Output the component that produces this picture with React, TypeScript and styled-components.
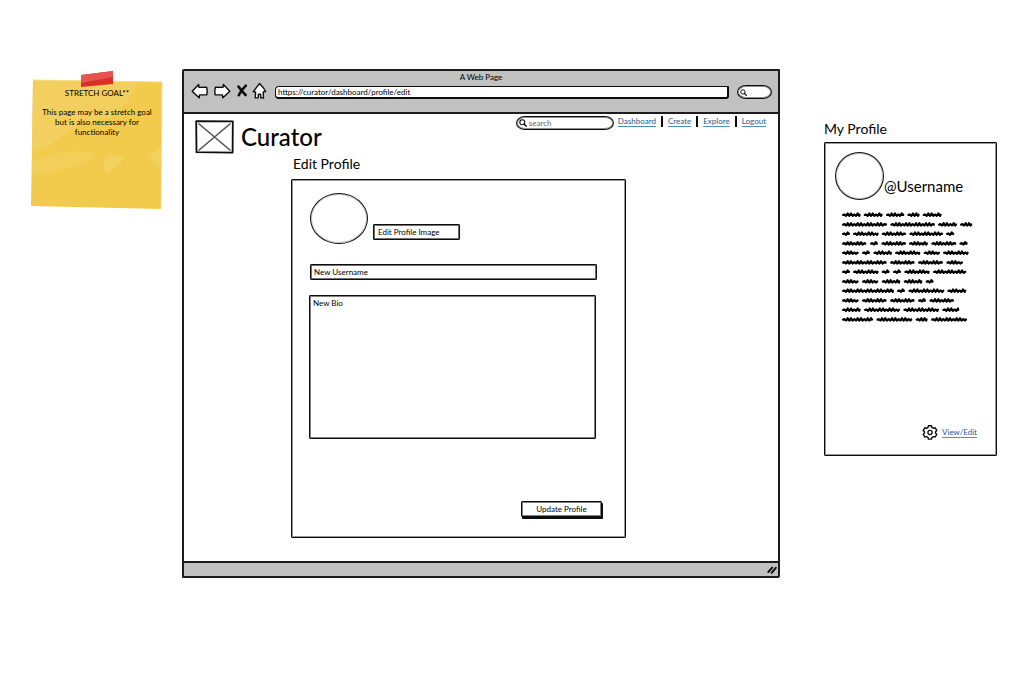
import React from "react";
import styled, { createGlobalStyle } from "styled-components";

const INK = "#0c0c0c";
const CHROME = "#c1c1c1";

const GlobalStyle = createGlobalStyle`
  *, *::before, *::after { box-sizing: border-box; }
  body {
    margin: 0;
    background: #fff;
    color: #000;
    font-family: Lato, "Open Sans", sans-serif;
    font-size: 8px;
    line-height: 10px;
  }
  button, input, textarea { font: inherit; color: inherit; }
  h1, h2, p, ul { margin: 0; padding: 0; font-weight: 400; }
  svg { display: block; }
`;

const Board = styled.main`
  display: grid;
  grid-template-columns: 132px minmax(520px, 1fr) 173px;
  align-items: start;
  padding: 69px 20px 40px 31px;
`;

/* Sticky note */
const Note = styled.aside`
  position: relative;
  height: 141px;
  padding: 19px 6px 0;
  text-align: center;
`;

const NotePaper = styled.svg`
  position: absolute;
  inset: 0;
  z-index: -1;
  width: 100%;
  height: 100%;
`;

const NoteText = styled.p`
  margin-bottom: 9px;
`;

/* Browser window */
const Browser = styled.section`
  margin: 0 44px 0 19px;
  border: 2px solid #1c1c1c;
  border-radius: 2px 1px 2px 1px;
`;

const Chrome = styled.header`
  height: 43px;
  padding-top: 1px;
  background: ${CHROME};
  border-bottom: 2px solid #1c1c1c;
`;

const WindowTitle = styled.p`
  text-align: center;
`;

const Toolbar = styled.div`
  display: flex;
  align-items: center;
  gap: 8px;
  height: 20px;
  padding: 0 6px 0 7px;
`;

const ToolButtons = styled.div`
  display: flex;
  align-items: center;
  gap: 4px;
  padding-bottom: 2px;
`;

const ToolButton = styled.button`
  padding: 0;
  border: 0;
  background: none;
`;

const AddressInput = styled.input`
  flex: 1;
  min-width: 0;
  height: 13px;
  padding: 0 2px;
  border: solid ${INK};
  border-width: 1px 2px 2px 1px;
  border-radius: 4px 1px 3px 4px;
  background: #fff;
  outline: 0;
`;

const SearchPill = styled.label<{ $width: number }>`
  display: flex;
  align-items: center;
  gap: 2px;
  width: ${(p) => p.$width}px;
  height: 14px;
  padding: 0 2px;
  border: 1px solid ${INK};
  border-radius: 9px / 7px;
  outline: 1px solid #00000070;
  outline-offset: -2px;
  background: #fff;
  input {
    flex: 1;
    min-width: 0;
    height: 10px;
    padding: 0;
    border: 0;
    outline: 0;
    background: transparent;
  }
  input::placeholder { color: #666; opacity: 1; }
`;

const SiteHeader = styled.header`
  display: flex;
  align-items: flex-start;
  padding: 2px 7px 0 11px;
`;

const Brand = styled.div`
  display: flex;
  align-items: center;
  gap: 7px;
  margin-top: 4px;
  margin-right: auto;
`;

const BrandName = styled.h1`
  font-size: 24px;
  line-height: 32px;
  font-weight: 500;
`;

const Nav = styled.ul`
  display: flex;
  list-style: none;
  li { padding: 0 5px; line-height: 11px; }
  li:first-child { padding-left: 4px; }
  li + li { border-left: 2px solid ${INK}; }
`;

const TextLink = styled.a`
  color: #1d5c94;
  text-decoration: underline;
  text-decoration-color: #4d8fc4;
  text-underline-offset: 2px;
`;

const Content = styled.div`
  margin: 0 152px 23px 107px;
  padding-top: 1px;
`;

const Heading = styled.h2`
  font-size: 14px;
  line-height: 18px;
  padding-left: 2px;
`;

const Card = styled.div`
  border: 1px solid ${INK};
  outline: 1px solid #00000066;
  outline-offset: -2px;
  border-radius: 1px;
`;

const ProfileForm = styled(Card).attrs({ as: "form" })`
  display: flex;
  flex-direction: column;
  margin-top: 6px;
  padding: 13px 29px 20px 17px;
`;

const PhotoRow = styled.div`
  display: flex;
  align-items: flex-end;
  gap: 5px;
  height: 51px;
  margin: 0 0 20px 1px;
`;

const Avatar = styled.div<{ $width: number; $height: number }>`
  flex: none;
  width: ${(p) => p.$width}px;
  height: ${(p) => p.$height}px;
  border: 1px solid ${INK};
  outline: 1px solid #00000038;
  outline-offset: -2px;
  border-radius: 50%;
`;

const PhotoButton = styled.button`
  width: 87px;
  height: 16px;
  margin-bottom: 4px;
  padding: 0 4px 1px;
  border: 1px solid ${INK};
  border-radius: 1px;
  outline: 1px solid #00000090;
  outline-offset: -2px;
  background: #fff;
  text-align: left;
  line-height: 10px;
`;

const TextField = styled.input`
  height: 16px;
  margin: 0 -1px 0 1px;
  padding: 0 3px 1px;
  border: 1px solid ${INK};
  border-radius: 1px;
  outline: 1px solid #00000090;
  outline-offset: -2px;
  &::placeholder { color: #000; opacity: 1; }
`;

const BioField = styled.textarea`
  height: 144px;
  margin-top: 15px;
  padding: 2px 3px;
  border: 1px solid ${INK};
  outline: 1px solid #00000080;
  outline-offset: -2px;
  border-radius: 1px;
  resize: none;
  &::placeholder { color: #000; opacity: 1; }
`;

const SubmitButton = styled.button`
  align-self: flex-end;
  width: 81px;
  height: 16px;
  margin: 62px -6px 0 0;
  padding: 0;
  border: 1px solid ${INK};
  border-radius: 1px;
  outline: 1px solid #00000080;
  outline-offset: -2px;
  background: #fff;
  box-shadow: 1px 2px 0 ${INK};
  line-height: 10px;
`;

const StatusBar = styled.footer`
  display: flex;
  justify-content: flex-end;
  align-items: center;
  height: 15px;
  padding-right: 1px;
  background: ${CHROME};
  border-top: 2px solid #1c1c1c;
`;

/* Profile panel */
const Sidebar = styled.aside`
  padding-top: 51px;
`;

const ProfileCard = styled(Card)`
  display: flex;
  flex-direction: column;
  height: 314px;
  margin-top: 4px;
  padding: 9px 19px 15px 10px;
`;

const SidebarHeading = styled(Heading)`
  padding-left: 0;
`;

const Identity = styled.div`
  display: flex;
  align-items: flex-end;
`;

const Handle = styled.span`
  padding-bottom: 5px;
  font-size: 15px;
  line-height: 18px;
`;

const Bio = styled.svg`
  margin: 10px 0 0 7px;
`;

const CardFooter = styled.div`
  display: flex;
  justify-content: flex-end;
  align-items: center;
  gap: 4px;
  margin-top: auto;
`;

const ArrowIcon = ({ flip = false }: { flip?: boolean }) => (
  <svg width="18" height="16" viewBox="0 0 18 16" aria-hidden="true">
    <path
      d="M1.2 8.2 7.6 1.4 8 4.4 15.6 4.2Q16.8 8 15.8 11.8L8.6 11.9 8.2 14.8Q4.8 11.8 1.2 8.2Z"
      transform={flip ? "translate(18 0) scale(-1 1)" : undefined}
      fill="#fff" stroke={INK} strokeWidth="1.4" strokeLinejoin="round"
    />
  </svg>
);

const CloseIcon = () => (
  <svg width="13" height="16" viewBox="0 0 13 16" aria-hidden="true">
    <path d="M3.4 3.6Q6.5 7.8 10.6 12M10.8 2.6Q6.2 7 3.8 12.2" fill="none" stroke={INK} strokeWidth="2.6" strokeLinecap="round" />
  </svg>
);

const HomeIcon = () => (
  <svg width="15" height="18" viewBox="0 0 15 18" aria-hidden="true">
    <path d="M7.5 1.6Q11 5 13.7 9.5L11.2 9.9 11.5 16 8.8 15.9 8.6 12.3 6.4 12.2 6.2 15.8 3.3 15.9 3.6 10 1.2 9.6Z" fill="#fff" stroke={INK} strokeWidth="1.4" strokeLinejoin="round" />
  </svg>
);

const Magnifier = ({ size }: { size: number }) => (
  <svg width={size} height={size} viewBox="0 0 8 8" aria-hidden="true">
    <circle cx="3.3" cy="3.3" r="2.5" fill="none" stroke={INK} strokeWidth="1.1" />
    <path d="M5.1 5.1 7.3 7.3" stroke={INK} strokeWidth="1.4" strokeLinecap="round" />
  </svg>
);

const LogoPlaceholder = () => (
  <svg width="39" height="34" viewBox="0 0 39 34" role="img" aria-label="Curator logo">
    <path d="M1.2 1.2 37.8 1.4 37.6 32.6 1.5 32.2Z" fill="#fff" stroke={INK} strokeWidth="1.8" strokeLinejoin="round" />
    <path d="M3.5 3.5 35.5 30.5M35.5 3.5 3.5 30.5" stroke="#555" strokeWidth="1.6" />
  </svg>
);

const GearIcon = () => (
  <svg width="16" height="16" viewBox="0 0 16 16" aria-hidden="true">
    <path
      d="M6.4 1.8H9.5L10 3.5 11.4 4.2 13.2 3.8 14.8 6.4 13.5 7.7V9.1L14.8 10.4 13.2 13 11.4 12.6 10 13.3 9.5 15.1H6.4L6 13.3 4.6 12.6 2.8 13 1.2 10.4 2.5 9.1V7.7L1.2 6.4 2.8 3.8 4.6 4.2 6 3.5Z"
      fill="#fff" stroke={INK} strokeWidth="1.4" strokeLinejoin="round"
    />
    <circle cx="8" cy="8.5" r="2.1" fill="none" stroke={INK} strokeWidth="1.3" />
  </svg>
);

/* Start and end of every scribbled word, three units to the pixel. */
const SCRIBBLES: number[][][] = [
  [[0, 56], [65, 122], [132, 187], [196, 233], [242, 299]],
  [[0, 135], [145, 279], [288, 345], [354, 391]],
  [[0, 24], [33, 110], [119, 192], [202, 303], [312, 337]],
  [[0, 73], [84, 108], [118, 192], [201, 258], [268, 343], [352, 377]],
  [[0, 50], [60, 84], [94, 150], [159, 235], [245, 294], [303, 380]],
  [[0, 134], [144, 218], [228, 303], [313, 363]],
  [[0, 24], [33, 110], [119, 143], [153, 177], [187, 263], [273, 373]],
  [[0, 50], [60, 109], [119, 175], [185, 241], [251, 275]],
  [[0, 156], [165, 189], [199, 307], [316, 373]],
  [[0, 50], [60, 134], [144, 218], [228, 252], [262, 336]],
  [[0, 56], [66, 174], [184, 291], [301, 352]],
  [[0, 93], [103, 211], [221, 257], [267, 375]],
];

const scribble = (from: number, to: number, y: number) => {
  let d = `M${from + 3} ${y + 1}`;
  for (let x = from + 7, i = 0; x < to - 3; x += 5, i++) {
    d += `L${x} ${y + (i % 2 ? 4 : i % 3 ? -4 : -1)}`;
  }
  return `${d}L${to - 3} ${y}M${from + 3} ${y + 1}H${to - 3}`;
};

const links = ["Dashboard", "Create", "Explore", "Logout"];

export default function App() {
  return (
    <>
      <GlobalStyle />
      <Board>
        <Note>
          <NotePaper viewBox="0 0 132 141" preserveAspectRatio="none" aria-hidden="true">
            <path d="M2 11 131 13 130 140 0 137Z" fill="#f2ca4c" />
            <path d="M2 11 107 13Q96 39 78 48 38 56 20 76L1 84Z" fill="#f3d064" opacity=".8" />
            <path d="M1 92Q30 79 58 83 71 87 54 93 34 103 1 106Z" fill="#f4d260" opacity=".7" />
            <path d="M75 87Q84 84 93 90 83 99 77 105 70 102 75 87ZM119 84 130 79V98Q121 94 119 84Z" fill="#f4d468" opacity=".7" />
            <path d="M2 11 131 13 130 140" fill="none" stroke="#f8df83" />
            <path d="M50 6 82 2V15L50 18Z" fill="#da3027" />
            <path d="M50 6 82 2V8L50 14Z" fill="#e5544e" />
          </NotePaper>
          <NoteText>STRETCH GOAL**</NoteText>
          <NoteText>This page may be a stretch goal but is also necessary for functionality</NoteText>
        </Note>

        <Browser>
          <Chrome>
            <WindowTitle>A Web Page</WindowTitle>
            <Toolbar>
              <ToolButtons>
                <ToolButton type="button" aria-label="Back"><ArrowIcon /></ToolButton>
                <ToolButton type="button" aria-label="Forward"><ArrowIcon flip /></ToolButton>
                <ToolButton type="button" aria-label="Stop"><CloseIcon /></ToolButton>
                <ToolButton type="button" aria-label="Home"><HomeIcon /></ToolButton>
              </ToolButtons>
              <AddressInput aria-label="Address" defaultValue="https://curator/dashboard/profile/edit" />
              <SearchPill $width={35}>
                <Magnifier size={7} />
                <input aria-label="Search the web" />
              </SearchPill>
            </Toolbar>
          </Chrome>

          <SiteHeader>
            <Brand>
              <LogoPlaceholder />
              <BrandName>Curator</BrandName>
            </Brand>
            <SearchPill $width={98}>
              <Magnifier size={8} />
              <input aria-label="Search Curator" placeholder="search" />
            </SearchPill>
            <nav>
              <Nav>
                {links.map((name) => (
                  <li key={name}><TextLink href="#">{name}</TextLink></li>
                ))}
              </Nav>
            </nav>
          </SiteHeader>

          <Content>
            <Heading>Edit Profile</Heading>
            <ProfileForm>
              <PhotoRow>
                <Avatar $width={58} $height={51} />
                <PhotoButton type="button">Edit Profile Image</PhotoButton>
              </PhotoRow>
              <TextField aria-label="New Username" placeholder="New Username" />
              <BioField aria-label="New Bio" placeholder="New Bio" />
              <SubmitButton type="button">Update Profile</SubmitButton>
            </ProfileForm>
          </Content>

          <StatusBar>
            <svg width="10" height="9" viewBox="0 0 10 9" aria-hidden="true">
              <path d="M1.3 7 5.2 2.6M4.6 7.8 8.8 2.8" stroke={INK} strokeWidth="1.9" strokeLinecap="round" />
            </svg>
          </StatusBar>
        </Browser>

        <Sidebar>
          <SidebarHeading>My Profile</SidebarHeading>
          <ProfileCard>
            <Identity>
              <Avatar $width={49} $height={48} />
              <Handle>@Username</Handle>
            </Identity>
            <Bio width="132" height="114" viewBox="0 0 396 342" role="img" aria-label="Profile bio">
              {SCRIBBLES.map((row, r) =>
                row.map(([from, to]) => (
                  <path key={`${r}-${from}`} d={scribble(from, to, 14 + Math.round(r * 28.5))} fill="none" stroke="#000" strokeWidth="6" strokeLinejoin="round" strokeLinecap="round" />
                ))
              )}
            </Bio>
            <CardFooter>
              <GearIcon />
              <TextLink href="#">View/Edit</TextLink>
            </CardFooter>
          </ProfileCard>
        </Sidebar>
      </Board>
    </>
  );
}
